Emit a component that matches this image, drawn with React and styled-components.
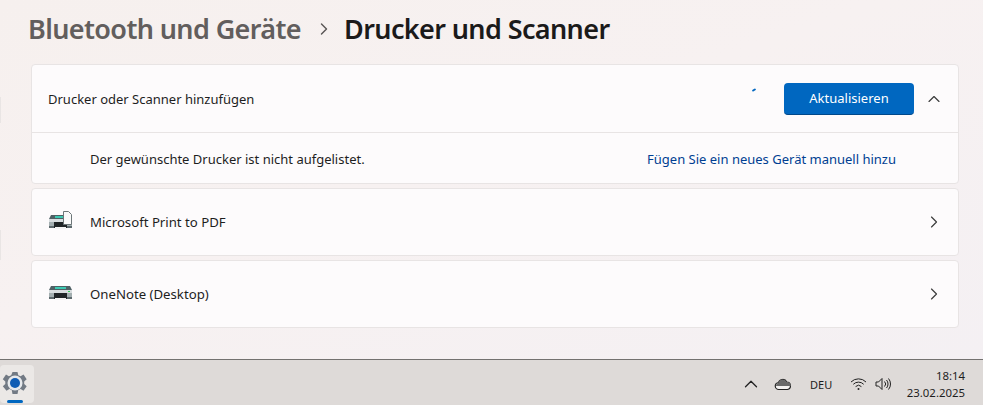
import React from 'react';
import styled, { createGlobalStyle } from 'styled-components';
import { ChevronRight, ChevronUp } from 'lucide-react';

const GlobalStyle = createGlobalStyle`
    html, body {
        margin: 0;
        padding: 0;
        height: 100%;
        overflow: hidden;
        background: #f5f0f0;
    }
    #root {
        height: 100%;
    }
`

const Page = styled.div`
    width: 983px;
    height: 405px;
    display: flex;
    flex-direction: column;
    font-family: "Noto Sans", "Open Sans", sans-serif;
    color: #1b1b1b;
`

const Content = styled.main`
    position: relative;
    flex: 1;
    min-height: 0;
    padding: 0 24px 0 31px;
    background: linear-gradient(160deg, #f6f0ee 0%, #f7f1f1 45%, #f4f0f3 100%);
`

const EdgeMark = styled.span`
    position: absolute;
    left: 0;
    top: ${({ $top }) => $top}px;
    width: 1px;
    height: ${({ $height }) => $height}px;
    background: #e9e5e4;
`

const Breadcrumb = styled.header`
    height: 64px;
    display: flex;
    align-items: center;
    margin-left: -3px;
    padding-bottom: 6px;
    box-sizing: border-box;
`

const Crumb = styled.h1`
    margin: 0;
    font-size: 27px;
    line-height: 36px;
    font-weight: 600;
    letter-spacing: -0.62px;
    color: ${({ $muted }) => ($muted ? '#625e5d' : '#1b1a1a')};
`

const CrumbArrow = styled(ChevronRight)`
    width: 20px;
    height: 20px;
    margin: 0 10px 0 13px;
    color: #5a5655;
`

const CardStack = styled.div`
    display: flex;
    flex-direction: column;
    gap: 4px;
`

const Card = styled.section`
    background: #fdfbfc;
    border: 1px solid #e8e4e4;
    border-radius: 4px;
`

const Row = styled.div`
    height: ${({ $height }) => $height}px;
    display: flex;
    align-items: center;
    box-sizing: border-box;
    padding: ${({ $divided }) => ($divided ? '2px' : '0')} 16px 0;
    font-size: 13px;
    border-top: ${({ $divided }) => ($divided ? '1px solid #e8e4e4' : 'none')};
`

const Label = styled.span`
    flex: 1;
    color: #1e1e1e;
    padding-left: ${({ $indent }) => ($indent ? '42px' : '0')};
`

const DeviceName = styled(Label)`
    font-size: 13.2px;
`

const Spinner = styled.span`
    width: 4px;
    height: 2px;
    margin-right: 28px;
    margin-bottom: 17px;
    background: #0067c0;
    border-radius: 1px;
    transform: rotate(-30deg);
`

const PrimaryButton = styled.button`
    width: 130px;
    height: 32px;
    border: none;
    border-bottom: 1px solid #00488a;
    border-radius: 4px;
    background: #0067c0;
    color: #ffffff;
    font-family: inherit;
    font-size: 13px;
    padding: 0;
`

const Chevron = styled.span`
    width: 16px;
    display: flex;
    justify-content: center;
    margin-left: ${({ $gap }) => $gap}px;
    color: #3c3c3c;

    svg {
        flex-shrink: 0;
    }
`

const ManualLink = styled.a`
    color: #003e92;
    font-size: 13px;
    margin-right: 46px;
    text-decoration: none;
`

const IconSlot = styled.span`
    width: 26px;
    margin-right: 16px;
    display: flex;
`

const Taskbar = styled.footer`
    height: 46px;
    flex-shrink: 0;
    display: flex;
    align-items: flex-start;
    box-sizing: border-box;
    border-top: 1px solid #73716f;
    background: #dedad8;
    color: #1e1e1e;
`

const StartTile = styled.div`
    position: relative;
    width: 34px;
    height: 38px;
    margin-top: 5px;
    padding-right: 4px;
    box-sizing: border-box;
    display: flex;
    align-items: center;
    justify-content: center;
    background: #ebe8e6;
    border-radius: 4px;
`

const ActiveBar = styled.span`
    position: absolute;
    left: 7px;
    bottom: 0;
    width: 16px;
    height: 3px;
    border-radius: 2px;
    background: #0067c0;
`

const Tray = styled.div`
    margin-left: auto;
    display: flex;
    align-items: center;
    height: 100%;
    padding-top: 3px;
    box-sizing: border-box;
`

const TrayChevron = styled(ChevronUp)`
    width: 22px;
    height: 22px;
    margin-right: 12px;
    color: #222;
`

const Language = styled.span`
    width: 22px;
    font-size: 11px;
    margin: 0 18px;
    white-space: nowrap;
`

const VolumeSlot = styled.span`
    display: flex;
    margin-left: 8px;
`

const Clock = styled.div`
    width: 91px;
    box-sizing: border-box;
    font-size: 11.4px;
    line-height: 17px;
    text-align: right;
    padding-right: 18px;
`

function PrinterIcon({ withPage }) {
    return (
        <svg width="26" height="24" viewBox={withPage ? '0 -1 26 24' : '0 0 26 24'}>
            <path d="M3 4h19l2 4H1z" fill="#4f6064" />
            <rect x="7" y="5" width="11" height="2" fill="#3cc9b2" />
            <rect x="1" y="8" width="23" height="9" rx="1" fill="#a3aeb0" />
            <rect x="1" y="8" width="23" height="3" fill="#d8dddf" />
            <rect x="1" y="15" width="23" height="2" fill="#5d696d" />
            <rect x="6" y="11" width="13" height="6" fill="#1f2426" />
            <rect x="7" y="16" width="11" height="2" fill="#f4f4f4" />
            {withPage
                ? <path d="M15.500 .5h5l3 3v10h-8z" fill="#fafafa" stroke="#6d7678" />
                : <rect x="20" y="9" width="2" height="1" fill="#35d05a" />}
        </svg>
    );
}

function GearIcon() {
    return (
        <svg width="26" height="26" viewBox="0 0 26 26">
            <path
                d="M10.500 1h5l.8 3.300 2.300 1 2.900-1.700 3.200 4.600-2.500 2.200v2.600l2.500 2.200-3.200 4.600-2.900-1.700-2.300 1-.8 3.900h-5l-.8-3.900-2.300-1-2.900 1.700L.8 15.200l2.500-2.200v-2.600L.8 8.200 4 3.600l2.900 1.700 2.300-1z"
                fill="#727a84"
            />
            <circle cx="13" cy="12" r="7.500" fill="#e6e9ec" />
            <circle cx="13" cy="12" r="5" fill="#0f5cb4" />
        </svg>
    );
}

function CloudIcon() {
    return (
        <svg width="18" height="14" viewBox="0 0 18 14">
            <path d="M5 12.500a3.500 3.500 0 0 1-.5-7A4.500 4.500 0 0 1 12.800 5 3.800 3.800 0 0 1 13.500 12.500z" fill="#f4f2f1" stroke="#222" strokeWidth="1.200" />
            <path d="M4.500 5.500A4.500 4.500 0 0 1 12.800 5 3.800 3.800 0 0 1 16.800 9H2a3.500 3.500 0 0 1 2.500-3.500z" fill="#6a6a6a" />
        </svg>
    );
}

function WifiIcon() {
    return (
        <svg width="17" height="14" viewBox="0 0 17 14" fill="none" stroke="#222" strokeWidth="1">
            <path d="M1 5a10.500 10.500 0 0 1 15 0" />
            <path d="M3.300 7.300a7.300 7.300 0 0 1 10.400 0" />
            <path d="M5.600 9.600a4.100 4.100 0 0 1 5.800 0" />
            <circle cx="8.500" cy="12" r="1" fill="#222" stroke="none" />
        </svg>
    );
}

function VolumeIcon() {
    return (
        <svg width="17" height="14" viewBox="0 0 17 14" fill="none" stroke="#222" strokeWidth="1">
            <path d="M1 5h2.500L7 1.500v11L3.500 9H1z" />
            <path d="M9.500 4.500a3.500 3.500 0 0 1 0 5" />
            <path d="M11.500 3a6 6 0 0 1 0 8" />
            <path d="M13.500 1.500a8.500 8.500 0 0 1 0 11" />
        </svg>
    );
}

const devices = [
    { name: 'Microsoft Print to PDF', withPage: true },
    { name: 'OneNote (Desktop)', withPage: false },
];

export default function App() {
    return (
        <Page>
            <GlobalStyle />
            <Content>
                <EdgeMark $top={97} $height={26} />
                <EdgeMark $top={230} $height={30} />
                <Breadcrumb>
                    <Crumb $muted>Bluetooth und Geräte</Crumb>
                    <CrumbArrow strokeWidth={1.7} />
                    <Crumb>Drucker und Scanner</Crumb>
                </Breadcrumb>
                <CardStack>
                    <Card>
                        <Row $height={67}>
                            <Label>Drucker oder Scanner hinzufügen</Label>
                            <Spinner />
                            <PrimaryButton>Aktualisieren</PrimaryButton>
                            <Chevron $gap={12}><ChevronUp size={20} strokeWidth={1.4} /></Chevron>
                        </Row>
                        <Row $height={51} $divided>
                            <Label $indent>Der gewünschte Drucker ist nicht aufgelistet.</Label>
                            <ManualLink href="#">Fügen Sie ein neues Gerät manuell hinzu</ManualLink>
                        </Row>
                    </Card>
                    {devices.map((device) => (
                        <Card key={device.name}>
                            <Row $height={66}>
                                <IconSlot><PrinterIcon withPage={device.withPage} /></IconSlot>
                                <DeviceName>{device.name}</DeviceName>
                                <Chevron $gap={0}><ChevronRight size={20} strokeWidth={1.4} /></Chevron>
                            </Row>
                        </Card>
                    ))}
                </CardStack>
            </Content>
            <Taskbar>
                <StartTile>
                    <GearIcon />
                    <ActiveBar />
                </StartTile>
                <Tray>
                    <TrayChevron strokeWidth={1.4} />
                    <CloudIcon />
                    <Language>DEU</Language>
                    <WifiIcon />
                    <VolumeSlot><VolumeIcon /></VolumeSlot>
                    <Clock>18:14<br />23.02.2025</Clock>
                </Tray>
            </Taskbar>
        </Page>
    );
}
